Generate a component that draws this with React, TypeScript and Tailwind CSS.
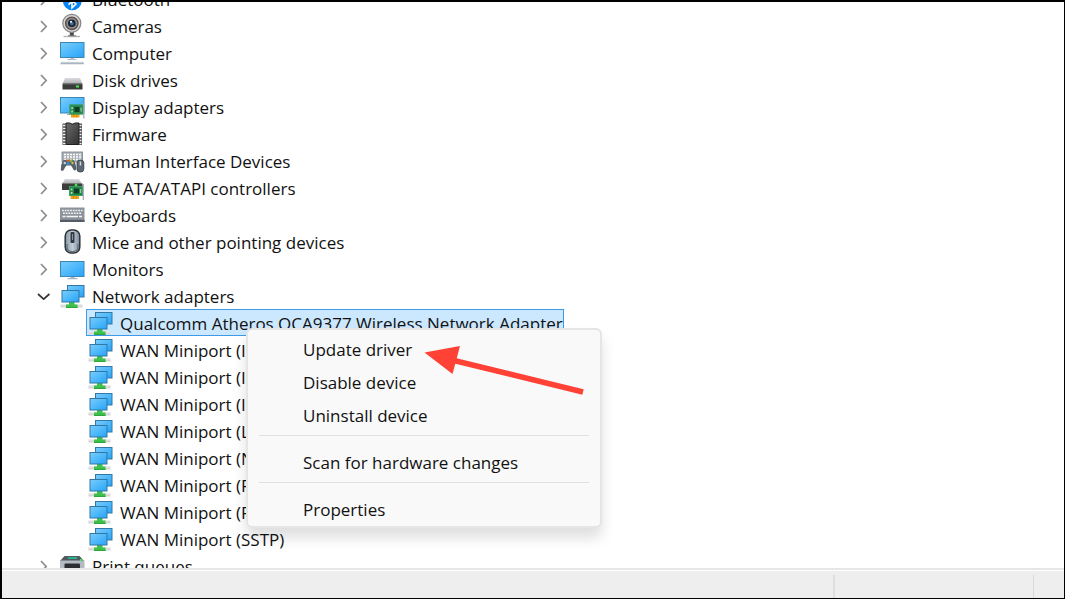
import React from 'react';

const svgClass = 'h-[27px] w-6 shrink-0 overflow-visible';

const Defs: React.FC = () => (
  <svg width="0" height="0" className="absolute" aria-hidden="true">
    <defs>
      <linearGradient id="screen" x1="0" y1="0" x2="1" y2="1">
        <stop offset="0" stopColor="#7cccfb" />
        <stop offset="0.5" stopColor="#4fb9fb" />
        <stop offset="1" stopColor="#27a2f6" />
      </linearGradient>
      <linearGradient id="metal" x1="0" y1="0" x2="0" y2="1">
        <stop offset="0" stopColor="#dcdde0" />
        <stop offset="1" stopColor="#a9abb0" />
      </linearGradient>
      <linearGradient id="chip" x1="0" y1="0" x2="1" y2="1">
        <stop offset="0" stopColor="#6b6b6b" />
        <stop offset="1" stopColor="#303030" />
      </linearGradient>
      <linearGradient id="mouse" x1="0" y1="0" x2="1" y2="0">
        <stop offset="0" stopColor="#8496a8" />
        <stop offset="0.5" stopColor="#c3ced9" />
        <stop offset="1" stopColor="#77899b" />
      </linearGradient>
    </defs>
  </svg>
);

const Card: React.FC = () => (
  <g>
    <path d="M10.5 21h8.5v4h-8.5z" fill="#f0a31c" />
    <path d="M13.3 22v3M16.2 22v3" stroke="#c77c10" strokeWidth="0.6" />
    <rect x="9" y="12" width="14" height="10" fill="#23894b" />
    <rect x="9.5" y="12.5" width="13" height="9" fill="none" stroke="#4aa56c" strokeWidth="0.7" />
    <rect x="14" y="14.5" width="5" height="5" fill="#123c26" />
    <rect x="10.8" y="14.5" width="1.6" height="2" fill="#a7dcb4" />
    <rect x="10.8" y="18" width="1.6" height="2" fill="#a7dcb4" />
    <rect x="20" y="15" width="1.2" height="4" fill="#8ecf9f" />
    <path d="M23.3 10v16" stroke="#a3a7ad" strokeWidth="1.2" />
  </g>
);

const BluetoothIcon = () => (
  <svg viewBox="0 0 24 27" className={svgClass}>
    <circle cx="12.3" cy="15.8" r="9.4" fill="#0a84f5" />
    <path d="M8.5 12l7.5 7-4 3.8V9l4 3.6-7.5 7" fill="none" stroke="#fff" strokeWidth="1.6" />
  </svg>
);

const CameraIcon = () => (
  <svg viewBox="0 0 24 27" className={svgClass}>
    <rect x="9.8" y="19" width="4" height="5" fill="#4a4a4a" />
    <path d="M3.5 24.5h16.5" stroke="#b5b5b5" strokeWidth="1.4" />
    <path d="M8 23.8h8" stroke="#777" strokeWidth="1" />
    <circle cx="11.8" cy="11.3" r="9" fill="#d6d4d1" stroke="#858585" strokeWidth="1.2" />
    <circle cx="11.8" cy="11.3" r="6.2" fill="#8d8d8d" stroke="#57504c" strokeWidth="1.4" />
    <circle cx="11.8" cy="11.3" r="3.8" fill="#17202b" />
    <circle cx="11.8" cy="11.6" r="2" fill="#3c6b94" />
    <circle cx="11" cy="9.8" r="1.1" fill="#e6f2fa" />
  </svg>
);

const ComputerIcon = () => (
  <svg viewBox="0 0 24 27" className={svgClass}>
    <rect x="0.5" y="3.5" width="23.5" height="15" fill="url(#screen)" stroke="#3a86b4" />
    <path d="M10.5 19h3.5v1h2.5v1h-9v-1h3z" fill="#b3bdc9" />
    <path d="M1.5 23h21.5l1.5 2.3h-24.5z" fill="#a9b4c0" />
    <path d="M2 23.3h20.5" stroke="#d3dae1" strokeWidth="0.8" />
  </svg>
);

const DiskIcon = () => (
  <svg viewBox="0 0 24 27" className={svgClass}>
    <path d="M5 12h15l2.5 6H2.5z" fill="url(#metal)" />
    <rect x="2.5" y="17.5" width="20" height="6" rx="0.6" fill="#3b3b3b" />
    <path d="M3 18h19" stroke="#777" strokeWidth="0.8" />
    <rect x="16" y="19.5" width="3" height="2" fill="#3df04a" />
  </svg>
);

const DisplayIcon = () => (
  <svg viewBox="0 0 24 27" className={svgClass}>
    <rect x="0.5" y="4.5" width="23.5" height="15.5" fill="url(#screen)" stroke="#3a86b4" />
    <path d="M7 21.5h3" stroke="#a4afbc" />
    <g transform="translate(0.5 -0.5)">
      <Card />
    </g>
  </svg>
);

const FirmwareIcon = () => (
  <svg viewBox="0 0 24 27" className={svgClass}>
    <path d="M2.5 3.5h19.5v21.5h-19.5z" fill="#4c4c4c" />
    <path d="M3 5.5h18.5M3 8.5h18.5M3 11.5h18.5M3 14.5h18.5M3 17.5h18.5M3 20.5h18.5M3 23.5h18.5" stroke="#efefef" strokeWidth="1.7" />
    <path d="M6 3h4q2 3 5 0h4v21.5H6z" fill="url(#chip)" stroke="#222" />
  </svg>
);

const HidIcon = () => (
  <svg viewBox="0 0 24 27" className={svgClass}>
    <rect x="2" y="5" width="20.5" height="10" fill="#a9afb6" stroke="#7b8289" strokeWidth="0.8" />
    <path d="M4 7.5h17M4 10h17M4 12.5h17" stroke="#fff" strokeWidth="1.3" strokeDasharray="2 1" />
    <path d="M3 13.5q2-1.5 4 0h3q2-1.5 4 0q2 3 2.3 9q-2 3-4.3-2.5l-1-1.5H6.5L5 20.5Q3 26 .8 23q0-6 2.2-9.5z" fill="#59626c" />
    <circle cx="4.8" cy="16" r="1.3" fill="#c6ccd2" />
    <path d="M7 12.5h2.5v2.5H7z" fill="#e5532d" />
    <path d="M9.8 12.5h2.5v2.5H9.8z" fill="#79bd3b" />
    <path d="M7 15.3h2.5v2.5H7z" fill="#1e9bf0" />
    <circle cx="12.5" cy="16" r="1.2" fill="#d6b83c" />
    <rect x="17" y="13" width="6.8" height="12" rx="3" fill="#5c6975" stroke="#333c45" strokeWidth="0.8" />
    <path d="M20.4 14.5v4" stroke="#d5dce3" strokeWidth="1.4" />
  </svg>
);

const IdeIcon = () => (
  <svg viewBox="0 0 24 27" className={svgClass}>
    <path d="M5 5h14l3 5H2z" fill="url(#metal)" />
    <rect x="2" y="9.5" width="20.5" height="6.5" fill="#3d3d3d" />
    <circle cx="16" cy="11" r="1.4" fill="#3df04a" />
    <Card />
  </svg>
);

const KeyboardIcon = () => (
  <svg viewBox="0 0 24 27" className={svgClass}>
    <rect x="0" y="6.5" width="24.5" height="14.5" fill="#8d939b" />
    <rect x="0" y="18.8" width="24.5" height="2.2" fill="#555c66" />
    <path d="M2 9.5h20.5M3 12.3h19" stroke="#f3f4f5" strokeWidth="1.6" strokeDasharray="1.8 0.9" />
    <path d="M2.5 15.5h3M6.5 15.5h11.5M19 15.5h3" stroke="#f3f4f5" strokeWidth="1.6" />
  </svg>
);

const MouseIcon = () => (
  <svg viewBox="0 0 24 27" className={svgClass}>
    <rect x="5.2" y="2" width="14.6" height="23" rx="6" fill="url(#mouse)" stroke="#2e3338" strokeWidth="1.5" />
    <path d="M7 16v3q0 4.5 5.5 4.5T18 19v-3" fill="none" stroke="#55616d" strokeWidth="1" />
    <rect x="10.5" y="4" width="4" height="11" rx="1" fill="#34393f" />
    <path d="M12.5 6v6" stroke="#8993a0" strokeWidth="1" />
  </svg>
);

const MonitorIcon = () => (
  <svg viewBox="0 0 24 27" className={svgClass}>
    <rect x="0.5" y="6.5" width="23.5" height="15" fill="url(#screen)" stroke="#3a86b4" />
    <path d="M10.5 22h4v1h3v1.2h-10V23h3z" fill="#a9b5c4" />
  </svg>
);

const NetworkIcon = () => (
  <svg viewBox="0 0 24 27" className={svgClass}>
    <rect x="7.5" y="3.5" width="16.5" height="11.5" fill="url(#screen)" stroke="#3278a5" />
    <rect x="0.5" y="22.5" width="22" height="3" fill="#d5d5d5" />
    <path d="M0.5 23h22" stroke="#ececec" strokeWidth="1" />
    <path d="M9 19.5h5.5v3h3v3.500H6v-3.5h3z" fill="#3fc14b" />
    <path d="M6 25.4h11.5" stroke="#2ea63b" strokeWidth="1.1" />
    <rect x="2" y="8.5" width="17" height="11.5" fill="url(#screen)" stroke="#3278a5" />
  </svg>
);

const PrinterIcon = () => (
  <svg viewBox="0 0 24 27" className={svgClass}>
    <path d="M4.5 4h15l4.500 5H0z" fill="#54595e" />
    <path d="M8 6h9" stroke="#27b99a" strokeWidth="1.8" />
    <rect x="0" y="8.5" width="24.5" height="14" fill="#b4bac1" />
    <rect x="4.5" y="11.5" width="15.5" height="8" rx="1" fill="#2b2e31" />
    <rect x="20" y="7" width="2" height="2" fill="#48e552" />
  </svg>
);

interface Device {
  name: string;
  icon: React.FC;
  children?: string[];
}

const devices: Device[] = [
  { name: 'Bluetooth', icon: BluetoothIcon },
  { name: 'Cameras', icon: CameraIcon },
  { name: 'Computer', icon: ComputerIcon },
  { name: 'Disk drives', icon: DiskIcon },
  { name: 'Display adapters', icon: DisplayIcon },
  { name: 'Firmware', icon: FirmwareIcon },
  { name: 'Human Interface Devices', icon: HidIcon },
  { name: 'IDE ATA/ATAPI controllers', icon: IdeIcon },
  { name: 'Keyboards', icon: KeyboardIcon },
  { name: 'Mice and other pointing devices', icon: MouseIcon },
  { name: 'Monitors', icon: MonitorIcon },
  {
    name: 'Network adapters',
    icon: NetworkIcon,
    children: [
      'Qualcomm Atheros QCA9377 Wireless Network Adapter',
      'WAN Miniport (IKEv2)',
      'WAN Miniport (IP)',
      'WAN Miniport (IPv6)',
      'WAN Miniport (L2TP)',
      'WAN Miniport (Network Monitor)',
      'WAN Miniport (PPPOE)',
      'WAN Miniport (PPTP)',
      'WAN Miniport (SSTP)',
    ],
  },
  { name: 'Print queues', icon: PrinterIcon },
];

const menuGroups = [
  ['Update driver', 'Disable device', 'Uninstall device'],
  ['Scan for hardware changes'],
  ['Properties'],
];

const ContextMenu: React.FC = () => (
  <div
    role="menu"
    className="absolute left-[159px] top-[18px] z-10 w-[356px] rounded-md border-2 border-[#e5e5e5] bg-[#f9f9f9] pt-[3px] shadow-[0_10px_14px_rgba(0,0,0,0.13)]"
  >
    {menuGroups.map((group, i) => (
      <React.Fragment key={group[0]}>
        {i > 0 && <hr className="mx-[11px] mb-[10px] mt-[3px] border-t border-[#e0e0e0]" />}
        {group.map((label) => (
          <button key={label} role="menuitem" className="block h-[33px] w-full pl-[55px] text-left">
            {label}
          </button>
        ))}
      </React.Fragment>
    ))}
    <svg viewBox="0 0 160 52" className="absolute left-[176px] top-[14px] h-[52px] w-[160px]" aria-hidden="true">
      <path d="M30 16.5L159 48" stroke="#ff4136" strokeWidth="5.5" />
      <path d="M0.5 8.500L36 2L28.5 30z" fill="#ff4136" />
    </svg>
  </div>
);

const Chevron: React.FC<{ open: boolean }> = ({ open }) => (
  <svg viewBox="0 0 16 16" className="h-4 w-4" fill="none" strokeWidth="1.7">
    {open ? (
      <path d="M2 6l5.7 5.2 5.7-5.2" stroke="#333" />
    ) : (
      <path d="M5 3l5.2 5.500L5 14" stroke="#8c8c8c" />
    )}
  </svg>
);

const DeviceTree: React.FC = () => (
  <ul role="tree" className="-mt-[17px] pl-[34px]">
    {devices.map(({ name, icon: Icon, children }) => (
      <li key={name} role="treeitem" aria-expanded={!!children}>
        <div className="flex h-[27px] items-center gap-2">
          <button aria-label={`Toggle ${name}`} className="h-4 w-4 shrink-0">
            <Chevron open={!!children} />
          </button>
          <Icon />
          <span className="whitespace-nowrap pt-0.5">{name}</span>
        </div>
        {children && (
          <ul role="group" className="pl-[50px]">
            {children.map((child, i) => (
              <li
                key={child}
                role="treeitem"
                aria-selected={i === 0}
                className={
                  i === 0
                    ? 'relative flex h-[27px] w-fit items-center gap-2 border border-[#3d9ae8] bg-[#cce8ff] pl-px'
                    : 'flex h-[27px] items-center gap-2 pl-0.5'
                }
              >
                <NetworkIcon />
                <span className="whitespace-nowrap pt-0.5">{child}</span>
                {i === 0 && <ContextMenu />}
              </li>
            ))}
          </ul>
        )}
      </li>
    ))}
  </ul>
);

const App: React.FC = () => (
  <div className="flex h-screen flex-col overflow-hidden border-b border-l-2 border-r border-t-2 border-black bg-white font-['Open_Sans',sans-serif] text-[17px] leading-[27px] text-[#111111]">
    <Defs />
    <main className="min-h-0 flex-1 overflow-hidden">
      <DeviceTree />
    </main>
    <footer className="flex h-[30px] shrink-0 flex-col border-t-2 border-[#e6e6e6]">
      <div className="mt-px flex flex-1 bg-[#eeeeee] pt-1">
        <div className="flex-1 border-r-2 border-[#dedede]" />
        <div className="w-[199px] border-r border-[#d8d8d8]" />
        <div className="w-[30px]" />
      </div>
    </footer>
  </div>
);

export default App;
